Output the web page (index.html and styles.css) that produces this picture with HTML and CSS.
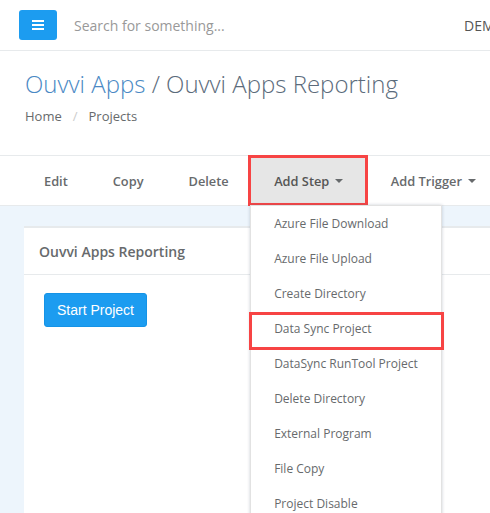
FILE: index.html
```html
<!DOCTYPE html>
<html>
<head>
<meta charset="utf-8">
<link rel="stylesheet" href="styles.css">
</head>
<body>
<div class="topbar">
  <button class="menu-btn"><svg width="12" height="10" viewBox="0 0 12 10"><rect x="0" y="0" width="12" height="2" fill="#fff"/><rect x="0" y="4" width="12" height="2" fill="#fff"/><rect x="0" y="8" width="12" height="2" fill="#fff"/></svg></button>
  <div class="search">Search for something...</div>
  <div class="user">DEMO USER</div>
</div>
<div class="heading">
  <h2 class="title"><span class="title-link">Ouvvi Apps</span> / Ouvvi Apps Reporting</h2>
  <div class="crumbs"><span>Home</span><span class="sep">/</span><span>Projects</span></div>
</div>
<div class="toolbar">
  <div class="tool">Edit</div>
  <div class="tool">Copy</div>
  <div class="tool">Delete</div>
  <div class="tool active">Add Step <span class="caret"></span>
    <ul class="dropdown">
      <li>Azure File Download</li>
      <li>Azure File Upload</li>
      <li>Create Directory</li>
      <li class="marked">Data Sync Project</li>
      <li>DataSync RunTool Project</li>
      <li>Delete Directory</li>
      <li>External Program</li>
      <li>File Copy</li>
      <li>Project Disable</li>
      <li>Project Enable</li>
    </ul>
  </div>
  <div class="tool">Add Trigger <span class="caret"></span></div>
</div>
<div class="content">
  <div class="card">
    <div class="card-head">Ouvvi Apps Reporting</div>
    <div class="card-body">
      <button class="start-btn">Start Project</button>
    </div>
  </div>
</div>
</body>
</html>
```
FILE: styles.css
```css
html, body {
  margin: 0;
  padding: 0;
  overflow: hidden;
  width: 490px;
  height: 513px;
  background: #fff;
  font-family: "Open Sans", "Liberation Sans", sans-serif;
  color: #676a6c;
}
.topbar {
  display: flex;
  align-items: center;
  height: 50px;
  padding-left: 19px;
  border-bottom: 1px solid #e7eaec;
  white-space: nowrap;
}
.menu-btn {
  width: 38px;
  height: 30px;
  border: none;
  border-radius: 3px;
  background: #1c9cf0;
  display: flex;
  align-items: center;
  justify-content: center;
  padding: 0;
  flex: none;
}
.search {
  flex: none;
  width: 390px;
  margin-left: 17px;
  font-size: 14px;
  color: #999;
}
.user {
  flex: none;
  font-size: 14px;
  color: #555;
}
.heading {
  padding: 15px 25px 0;
  height: 104px;
  box-sizing: border-box;
}
.title {
  margin: 0;
  font-weight: 300;
  font-size: 24px;
  line-height: 36px;
  color: #5b6b7b;
}
.title-link {
  color: #4a89c4;
}
.crumbs {
  margin-top: 5px;
  font-size: 13px;
  color: #676a6c;
}
.crumbs .sep {
  color: #ccc;
  margin: 0 11px;
}
.toolbar {
  display: flex;
  padding-left: 21.5px;
  border-top: 1px solid #e7eaec;
  border-bottom: 1px solid #e7eaec;
  box-sizing: border-box;
  height: 51px;
  white-space: nowrap;
}
.tool {
  flex: none;
  position: relative;
  display: flex;
  align-items: center;
  padding: 0 22.5px;
  font-size: 12.8px;
  font-weight: 600;
  color: #676a6c;
}
.tool.active {
  background: #e6e6e6;
  box-shadow: inset 0 0 0 3px #f74444;
  margin-top: -1px;
  margin-bottom: -1px;
  margin-left: -3px;
  padding: 0 25px 0 26px;
  color: #555;
}
.caret {
  display: inline-block;
  width: 0;
  height: 0;
  margin-left: 6px;
  border-left: 4px solid transparent;
  border-right: 4px solid transparent;
  border-top: 4px solid #676a6c;
}
.dropdown {
  position: absolute;
  top: 50px;
  left: 2px;
  width: 190px;
  margin: 0;
  padding: 0;
  list-style: none;
  background: #fff;
  border: 1px solid #e2e2e2;
  box-shadow: 0 0 3px rgba(86, 96, 117, 0.3);
  z-index: 10;
}
.dropdown li {
  position: relative;
  height: 35px;
  line-height: 35px;
  padding-left: 23px;
  font-size: 12px;
  font-weight: 400;
  color: #676a6c;
}
.dropdown li.marked::after {
  content: "";
  position: absolute;
  top: 1px;
  bottom: -4px;
  left: -2px;
  right: -3px;
  border: 3px solid #f74444;
}
.content {
  background: #edf5fc;
  padding: 20px 0 0 24px;
  height: 400px;
}
.card {
  background: #fff;
  border-top: 2px solid #e7eaec;
  height: 400px;
}
.card-head {
  height: 46px;
  padding: 0 15px;
  display: flex;
  align-items: center;
  border-bottom: 1px solid #e7eaec;
  font-size: 14px;
  font-weight: 600;
  color: #676a6c;
}
.card-body {
  padding: 18px 20px;
}
.start-btn {
  width: 103px;
  height: 34px;
  border: 1px solid #1593e6;
  border-radius: 3px;
  background: #1c9cf0;
  color: #fff;
  font-family: "Liberation Sans", Arial, sans-serif;
  font-size: 14px;
  padding: 0;
}
```
